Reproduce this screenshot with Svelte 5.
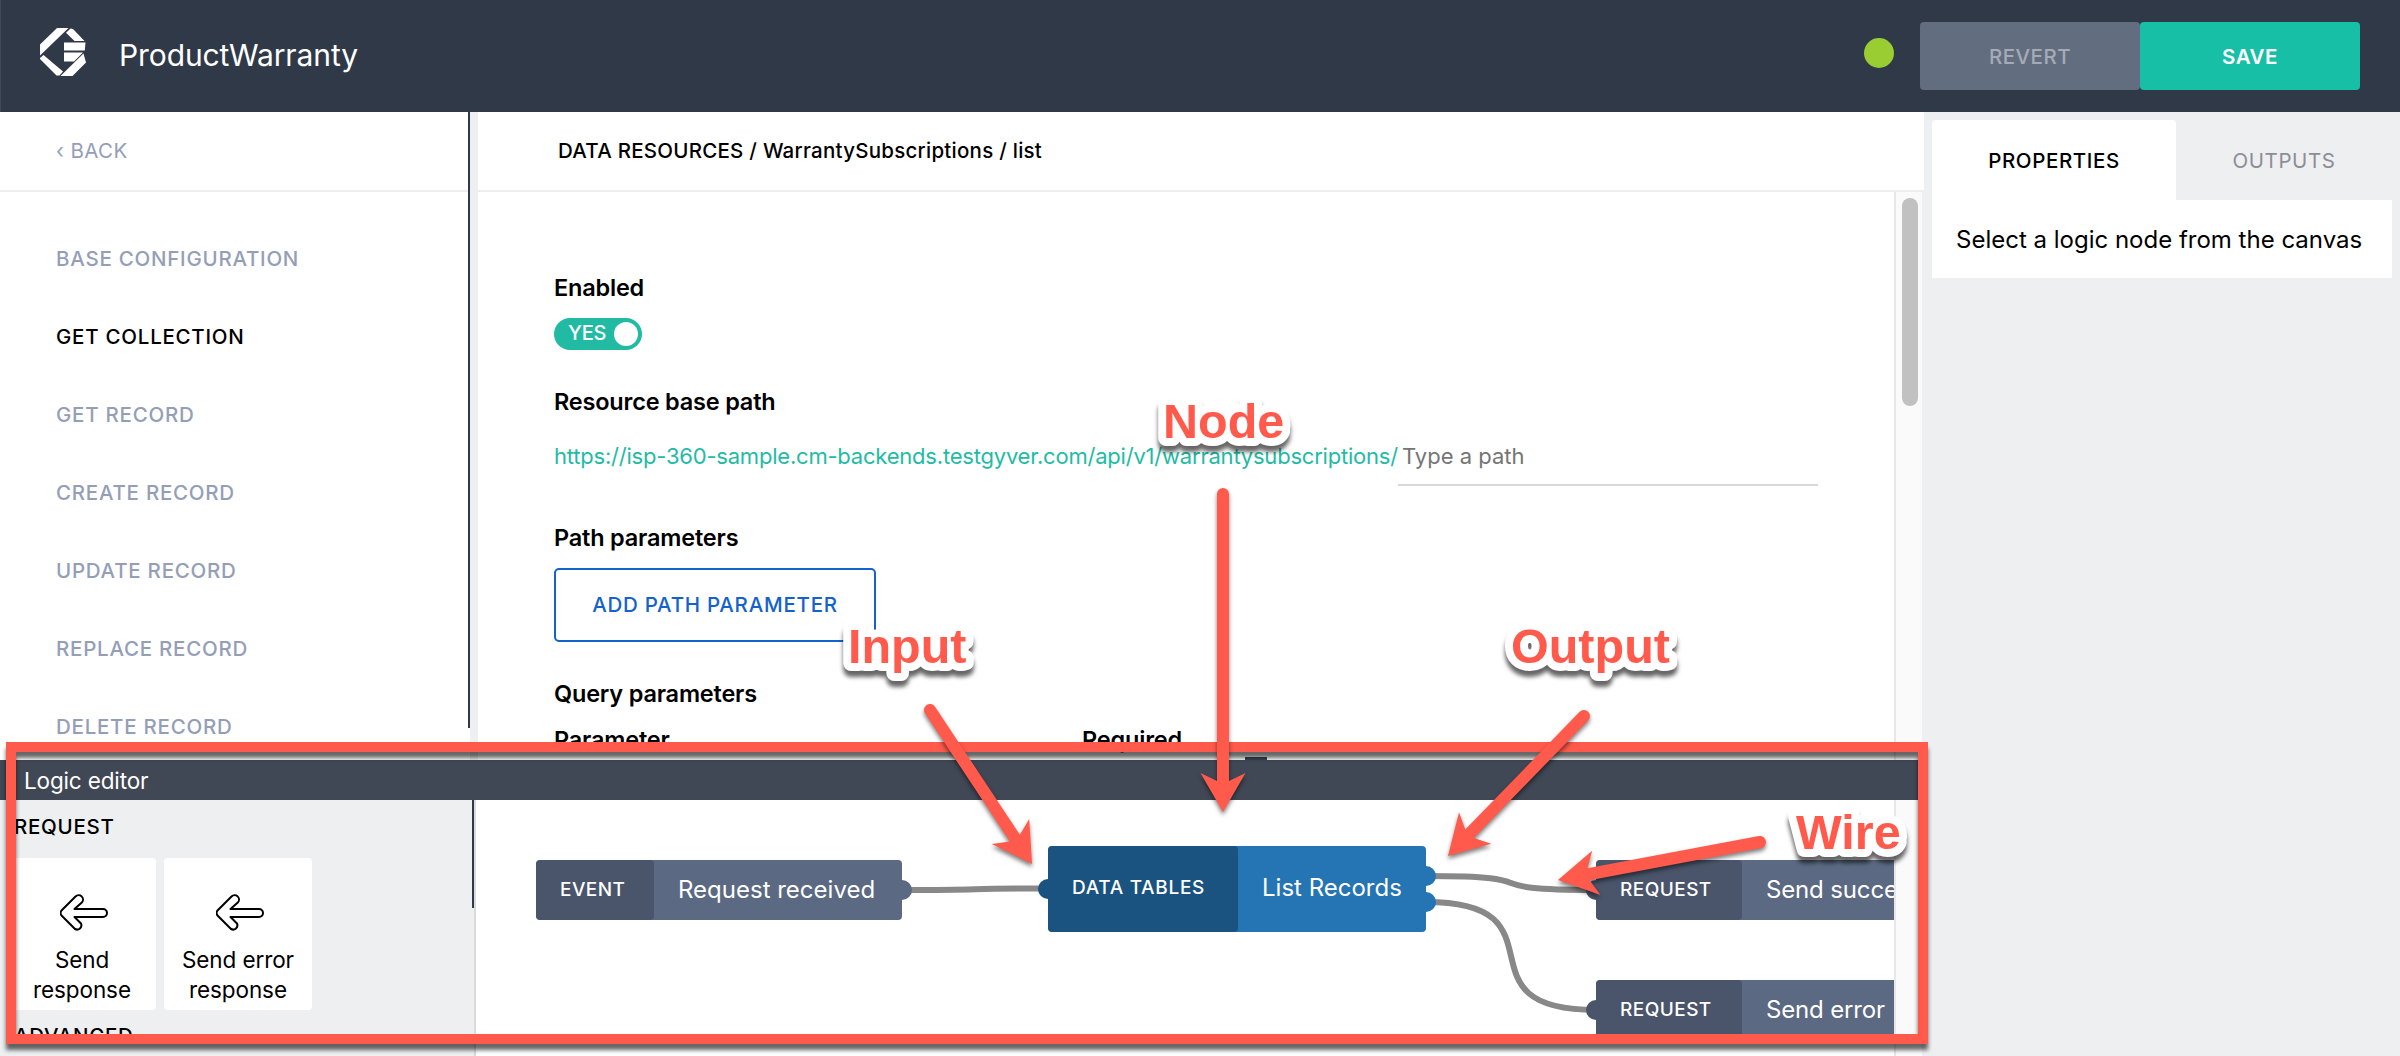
<script>
  const menu = [
    'BASE CONFIGURATION',
    'GET COLLECTION',
    'GET RECORD',
    'CREATE RECORD',
    'UPDATE RECORD',
    'REPLACE RECORD',
    'DELETE RECORD',
  ];
  const active = 'GET COLLECTION';

  const tools = ['Send response', 'Send error response'];

  // Callout labels: text, left edge and baseline on the overlay
  const labels = [
    { text: 'Node', x: 1163, y: 438 },
    { text: 'Input', x: 848, y: 663 },
    { text: 'Output', x: 1511, y: 663 },
    { text: 'Wire', x: 1796, y: 849 },
  ];

  // Callout arrows: tail point to tip point
  const arrows = [
    { from: [1223, 494], to: [1223, 812] },
    { from: [930, 710], to: [1032, 864] },
    { from: [1584, 716], to: [1448, 856] },
    { from: [1760, 842], to: [1558, 880] },
  ].map(({ from, to }) => {
    const dx = to[0] - from[0];
    const dy = to[1] - from[1];
    const len = Math.hypot(dx, dy);
    return {
      transform: `translate(${to[0]} ${to[1]}) rotate(${(Math.atan2(dy, dx) * 180) / Math.PI})`,
      d: `M0 0L-39 22.5L-31 6H${-len}A6 6 0 0 1 ${-len} -6H-31L-39 -22.5Z`,
    };
  });
</script>

<div class="app">
  <header class="topbar">
    <svg class="logo" viewBox="0 0 46 48">
      <g fill="#fff">
        <path d="M17 0H28.500L0 27.500V16.500Z" />
        <path d="M30.500 .500L33 1L44.500 13H34.500L26 4.800Z" />
        <path d="M24 14.500H45.500L44.800 22.500H24Z" />
        <path d="M24 24.500H43L34 33.500H24Z" />
        <path d="M3.500 27L23 43.500L19.500 47.500H16.500L0 31V30Z" />
        <path d="M43.500 25.500L46 34.500L32.500 48H20.500Z" />
      </g>
    </svg>
    <h1>ProductWarranty</h1>
    <span class="status"></span>
    <button class="btn revert">REVERT</button>
    <button class="btn save">SAVE</button>
  </header>

  <div class="body">
    <div class="workspace">
      <div class="upper">
        <nav class="sidebar">
          <div class="back">‹ BACK</div>
          <ul>
            {#each menu as item}
              <li class:active={item === active}>{item}</li>
            {/each}
          </ul>
        </nav>
        <main>
          <div class="crumbs">DATA RESOURCES / WarrantySubscriptions / list</div>
          <div class="scroll">
            <form class="form">
              <h2 class="enabled-title">Enabled</h2>
              <div class="toggle"><span>YES</span><i></i></div>
              <h2 class="base-title">Resource base path</h2>
              <div class="path">
                <span class="url">https://isp-360-sample.cm-backends.testgyver.com/api/v1/warrantysubscriptions/</span>
                <span class="field">Type a path</span>
              </div>
              <h2 class="path-title">Path parameters</h2>
              <div class="add">ADD PATH PARAMETER</div>
              <h2 class="query-title">Query parameters</h2>
              <div class="cols"><h2>Parameter</h2><h2>Required</h2></div>
            </form>
            <div class="track"><div class="thumb"></div></div>
          </div>
        </main>
        <div class="handle"></div>
      </div>

      <section class="editor">
        <div class="editor-bar">Logic editor</div>
        <div class="editor-body">
          <aside class="palette">
            <h3>REQUEST</h3>
            <div class="tools">
              {#each tools as tool}
                <div class="tool">
                  <svg viewBox="0 0 48 37">
                    <path
                      d="M1.500 16.500L15.500 2.500A4.300 4.300 0 0 1 21.800 8.500L14.500 15H43A4 4 0 0 1 43 23H14.500L21 29.500A4.300 4.300 0 0 1 15 35L1.500 21.500Q-.500 19 1.500 16.500Z"
                      fill="none" stroke="#000" stroke-width="2" stroke-linejoin="round"
                    />
                  </svg>
                  <p>{tool}</p>
                </div>
              {/each}
            </div>
            <h3 class="advanced">ADVANCED</h3>
          </aside>
          <div class="rail"><div class="rail-thumb"></div></div>
          <div class="canvas">
            <svg class="wires" viewBox="476 800 1418 256">
              <g fill="none" stroke="#888" stroke-width="6">
                <path d="M902 890C1000 890 950 888.500 1048 888.500" />
                <path d="M1426 876C1560 876 1462 890 1596 890" />
                <path d="M1426 902C1571 902 1451 1010 1596 1010" />
              </g>
              <g class="grey-out"><circle cx="902" cy="890" r="10" /></g>
              <g class="grey-in"><circle cx="1596" cy="890" r="10" /><circle cx="1596" cy="1010" r="10" /></g>
              <g class="blue-in"><circle cx="1048" cy="889" r="10" /></g>
              <g class="blue-out"><circle cx="1426" cy="876" r="10" /><circle cx="1426" cy="902" r="10" /></g>
            </svg>
            <div class="node event"><b>EVENT</b><span>Request received</span></div>
            <div class="node data"><b>DATA TABLES</b><span>List Records</span></div>
            <div class="node request first"><b>REQUEST</b><span>Send succe</span></div>
            <div class="node request second"><b>REQUEST</b><span>Send error</span></div>
          </div>
          <div class="track plain"></div>
        </div>
      </section>
    </div>

    <aside class="inspector">
      <div class="tabs">
        <div class="tab on">PROPERTIES</div>
        <div class="tab">OUTPUTS</div>
      </div>
      <div class="panel"><span>Select a logic node from the canvas</span></div>
    </aside>
  </div>

  <svg class="overlay" viewBox="0 0 2400 1056">
    <rect class="frame" x="11" y="747" width="1912" height="292" />
    {#each arrows as a}
      <g class="arrow"><path transform={a.transform} d={a.d} /></g>
    {/each}
    {#each labels as l}
      <text x={l.x} y={l.y}>{l.text}</text>
    {/each}
  </svg>
</div>

<style>
  :global(body) { margin: 0; }
  .app {
    position: relative;
    width: 2400px;
    height: 1056px;
    overflow: hidden;
    display: flex;
    flex-direction: column;
    background: #eeeff1;
    color: #000;
    font-family: Inter, "Liberation Sans", sans-serif;
    font-size: 24px;
  }
  h1, h2, h3, p, ul { margin: 0; padding: 0; font-size: inherit; font-weight: 500; }

  .topbar {
    flex: none;
    height: 112px;
    box-sizing: border-box;
    display: flex;
    align-items: center;
    padding: 0 40px 0 39px;
    border-left: 1px solid #414a58;
    background: #303948;
  }
  .logo { width: 46px; height: 48px; margin-bottom: 8px; }
  h1 { margin: 0 0 2px 33px; flex: 1; color: #fff; font-size: 30px; font-weight: 400; letter-spacing: -.1px; }
  .status { width: 30px; height: 30px; margin: 0 26px 6px 0; border-radius: 50%; background: #9acd32; }
  .btn {
    width: 220px;
    height: 68px;
    border: 0;
    border-radius: 4px;
    font: 500 20.5px Inter, sans-serif;
    letter-spacing: .5px;
  }
  .revert { background: #636d80; color: #a5abb6; }
  .save { background: #18bfa7; color: #fff; font-weight: 600; }

  .body { flex: 1; display: flex; min-height: 0; }
  .workspace { width: 1924px; display: flex; flex-direction: column; }
  .upper { position: relative; height: 648px; display: flex; overflow: hidden; }

  .sidebar { width: 470px; background: linear-gradient(#303948, #303948) 468px 0 / 2px 616px no-repeat #fff; }
  .back, .crumbs { box-sizing: border-box; height: 80px; line-height: 78px; font-size: 20.5px; border-bottom: 2px solid #eeeeef; }
  .back { width: 468px; padding-left: 56px; color: #959eb7; letter-spacing: .4px; }
  ul { list-style: none; padding: 28px 0 0 56px; }
  li { height: 78px; line-height: 78px; font-size: 20.5px; letter-spacing: .75px; color: #959eb7; }
  li.active { color: #000; }

  main { flex: 1; margin-left: 8px; background: #fff; display: flex; flex-direction: column; }
  .crumbs { padding-left: 80px; font-weight: 500; letter-spacing: .25px; }
  .scroll { flex: 1; display: flex; min-height: 0; overflow: hidden; }
  .form { flex: 1; padding-left: 76px; }
  h2 { line-height: 30px; font-size: 23.5px; font-weight: 600; letter-spacing: -.2px; }
  .enabled-title { margin-top: 81px; }
  .toggle {
    width: 88px;
    height: 32px;
    box-sizing: border-box;
    margin-top: 15px;
    padding: 0 4px 0 14px;
    display: flex;
    align-items: center;
    justify-content: space-between;
    border-radius: 16px;
    background: #20bba2;
    color: #fff;
    font-size: 20px;
    font-weight: 500;
  }
  .toggle span { margin-bottom: 2px; letter-spacing: -.2px; }
  .toggle i { width: 24px; height: 24px; border-radius: 50%; background: #fff; }
  .base-title { margin-top: 37px; }
  .path { display: flex; margin-top: 15px; height: 55px; line-height: 48px; font-size: 22px; }
  .url { width: 844px; color: #1fbba3; white-space: nowrap; letter-spacing: -.21px; }
  .field { width: 420px; height: 54px; box-sizing: border-box; padding-left: 4px; color: #757575; border-bottom: 2px solid #d8d9de; }
  .path-title { margin-top: 36px; }
  .add {
    width: 322px;
    height: 74px;
    margin-top: 15px;
    box-sizing: border-box;
    border: 2px solid #1462cc;
    border-radius: 5px;
    color: #1462cc;
    font-size: 20.5px;
    font-weight: 500;
    line-height: 70px;
    letter-spacing: .75px;
    text-align: center;
  }
  .query-title { margin-top: 37px; }
  .cols { display: flex; margin-top: 16px; }
  .cols h2 { width: 528px; }

  .track { width: 26px; border-left: 2px solid #e7e7e8; border-right: 2px solid #eeeff1; background: #fafafa; }
  .thumb { width: 16px; height: 208px; margin: 6px 0 0 6px; border-radius: 8px; background: #c1c1c1; }
  .handle { position: absolute; left: 1245px; bottom: 0; width: 22px; height: 3px; background: #3b4656; }

  .editor { flex: 1; display: flex; flex-direction: column; min-height: 0; }
  .editor-bar { height: 40px; line-height: 41px; padding-left: 24px; background: #414855; color: #fff; font-size: 22.5px; letter-spacing: -.15px; }
  .editor-body { flex: 1; display: flex; min-height: 0; overflow: hidden; }
  .palette { width: 472px; }
  h3 { padding-left: 14px; line-height: 30px; margin-top: 12px; font-size: 20.5px; letter-spacing: .7px; }
  .tools { display: flex; gap: 8px; margin: 16px 0 0 8px; }
  .tool {
    width: 148px;
    height: 152px;
    box-sizing: border-box;
    padding-top: 36px;
    border-radius: 4px;
    background: #fff;
    text-align: center;
  }
  .tool svg { display: block; width: 48px; height: 37px; margin: 0 auto; position: relative; left: 2px; }
  .tool p { width: 130px; margin: 14px auto 0; line-height: 30px; font-size: 22.5px; font-weight: 400; letter-spacing: -.1px; }
  .advanced { margin-top: 11px; }
  .rail { width: 2px; border-right: 2px solid #d9dadd; }
  .rail-thumb { width: 2px; height: 108px; background: #303948; }
  .canvas { position: relative; flex: 1; background: #fff; overflow: hidden; }
  .wires { position: absolute; inset: 0; width: 1418px; height: 256px; }
  .grey-out { fill: #5b6982; }
  .grey-in { fill: #4a556b; }
  .blue-in { fill: #1a537f; }
  .blue-out { fill: #2574b4; }
  .node {
    position: absolute;
    display: flex;
    align-items: center;
    height: 60px;
    border-radius: 4px;
    overflow: hidden;
    background: #5b6982;
    color: #fff;
    white-space: nowrap;
  }
  .node b {
    align-self: stretch;
    display: flex;
    align-items: center;
    box-sizing: border-box;
    padding: 0 0 1px 24px;
    border-radius: 4px;
    background: #4a556b;
    font-size: 19px;
    font-weight: 500;
    letter-spacing: .45px;
  }
  .node span { padding: 0 0 1px 24px; }
  .event { left: 60px; top: 60px; width: 366px; }
  .event b { width: 118px; }
  .data { left: 572px; top: 46px; width: 378px; height: 86px; background: #2574b4; }
  .data b { width: 190px; background: #1a537f; letter-spacing: .7px; }
  .data b, .data span { padding-bottom: 3px; }
  .request { left: 1120px; width: 298px; border-radius: 4px 0 0 4px; }
  .request b { width: 146px; flex: none; }
  .request span { letter-spacing: -.15px; }
  .first { top: 60px; }
  .second { top: 180px; }

  .inspector { width: 460px; margin-left: 8px; padding-top: 8px; }
  .tabs { display: flex; height: 80px; }
  .tab { flex: 1; line-height: 81px; text-align: center; font-size: 20.5px; color: #8c8d96; letter-spacing: .6px; }
  .tab.on { flex: none; width: 244px; border-radius: 4px 4px 0 0; background: #fff; color: #000; font-weight: 500; }
  .panel { height: 78px; line-height: 80px; padding-left: 24px; background: #fff; }

  .overlay { position: absolute; inset: 0; width: 2400px; height: 1056px; pointer-events: none; }
  .frame { fill: none; stroke: #ff5a4b; stroke-width: 10; filter: drop-shadow(0 6px 2px rgba(0, 0, 0, .6)); }
  .arrow { fill: #ff5a4b; filter: drop-shadow(0 3px 2px rgba(0, 0, 0, .5)); }
  text {
    font: bold 48.5px "Liberation Sans", Arial, sans-serif;
    fill: #ff5a4b;
    stroke: #fff;
    stroke-width: 16px;
    stroke-linejoin: round;
    paint-order: stroke;
    filter: drop-shadow(0 6px 2px rgba(0, 0, 0, .6));
  }
</style>
